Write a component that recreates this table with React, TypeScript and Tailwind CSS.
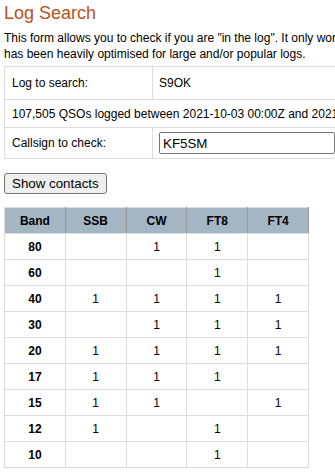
import React from 'react';

const bands = [
  { band: '80', ssb: '', cw: '1', ft8: '1', ft4: '' },
  { band: '60', ssb: '', cw: '', ft8: '1', ft4: '' },
  { band: '40', ssb: '1', cw: '1', ft8: '1', ft4: '1' },
  { band: '30', ssb: '', cw: '1', ft8: '1', ft4: '1' },
  { band: '20', ssb: '1', cw: '1', ft8: '1', ft4: '1' },
  { band: '17', ssb: '1', cw: '1', ft8: '1', ft4: '' },
  { band: '15', ssb: '1', cw: '1', ft8: '', ft4: '1' },
  { band: '12', ssb: '1', cw: '', ft8: '1', ft4: '' },
  { band: '10', ssb: '', cw: '', ft8: '1', ft4: '' },
];

const modes = ['SSB', 'CW', 'FT8', 'FT4'];

export default function App() {
  return (
    <div className="w-[335px] h-[476px] overflow-hidden bg-white text-black font-['Liberation_Sans',Arial,sans-serif] text-[12px] px-[4px]">
      <h1 className="text-[18px] leading-[24px] text-[#b6521c] pt-[1px]">Log Search</h1>
      <p className="mt-[5px] leading-[16px] whitespace-nowrap">
        This form allows you to check if you are "in the log". It only works for logs that are uploaded to the server, and<br />
        has been heavily optimised for large and/or popular logs.
      </p>

      <table className="mt-[4px] w-[440px] border-collapse border border-[#ddd]">
        <tbody>
          <tr>
            <td className="w-[148px] border border-[#ddd] px-[7px] h-[33px]">Log to search:</td>
            <td className="border border-[#ddd] px-[6px]">S9OK</td>
          </tr>
          <tr>
            <td colSpan={2} className="border border-[#ddd] px-[7px] h-[28px] whitespace-nowrap">
              107,505 QSOs logged between 2021-10-03 00:00Z and 2021-10-31 23:59Z
            </td>
          </tr>
          <tr>
            <td className="border border-[#ddd] px-[7px] h-[31px]">Callsign to check:</td>
            <td className="border border-[#ddd] px-[6px]">
              <input
                defaultValue="KF5SM"
                className="block w-[176px] h-[22px] border border-[#767676] rounded-[2px] px-[3px] text-[13.33px] font-['Liberation_Sans',Arial,sans-serif] outline-none"
              />
            </td>
          </tr>
        </tbody>
      </table>

      <button className="mt-[14px] h-[21px] px-[7px] bg-[#efefef] border border-[#767676] rounded-[3px] text-[13.33px] leading-none font-['Liberation_Sans',Arial,sans-serif]">
        Show contacts
      </button>

      <table className="mt-[13px] w-[305px] border-collapse border border-[#ddd] text-center table-fixed">
        <thead>
          <tr className="bg-[#a4b6c4]">
            <th className="h-[26px] border border-[#ddd] border-r-[#999] font-bold">Band</th>
            {modes.map((m) => (
              <th key={m} className="border border-[#999] border-y-[#ddd] font-bold">{m}</th>
            ))}
          </tr>
        </thead>
        <tbody>
          {bands.map((r) => (
            <tr key={r.band}>
              <td className="h-[26px] border border-[#ddd] font-bold">{r.band}</td>
              <td className="border border-[#ddd]">{r.ssb}</td>
              <td className="border border-[#ddd]">{r.cw}</td>
              <td className="border border-[#ddd]">{r.ft8}</td>
              <td className="border border-[#ddd]">{r.ft4}</td>
            </tr>
          ))}
        </tbody>
      </table>
    </div>
  );
}
